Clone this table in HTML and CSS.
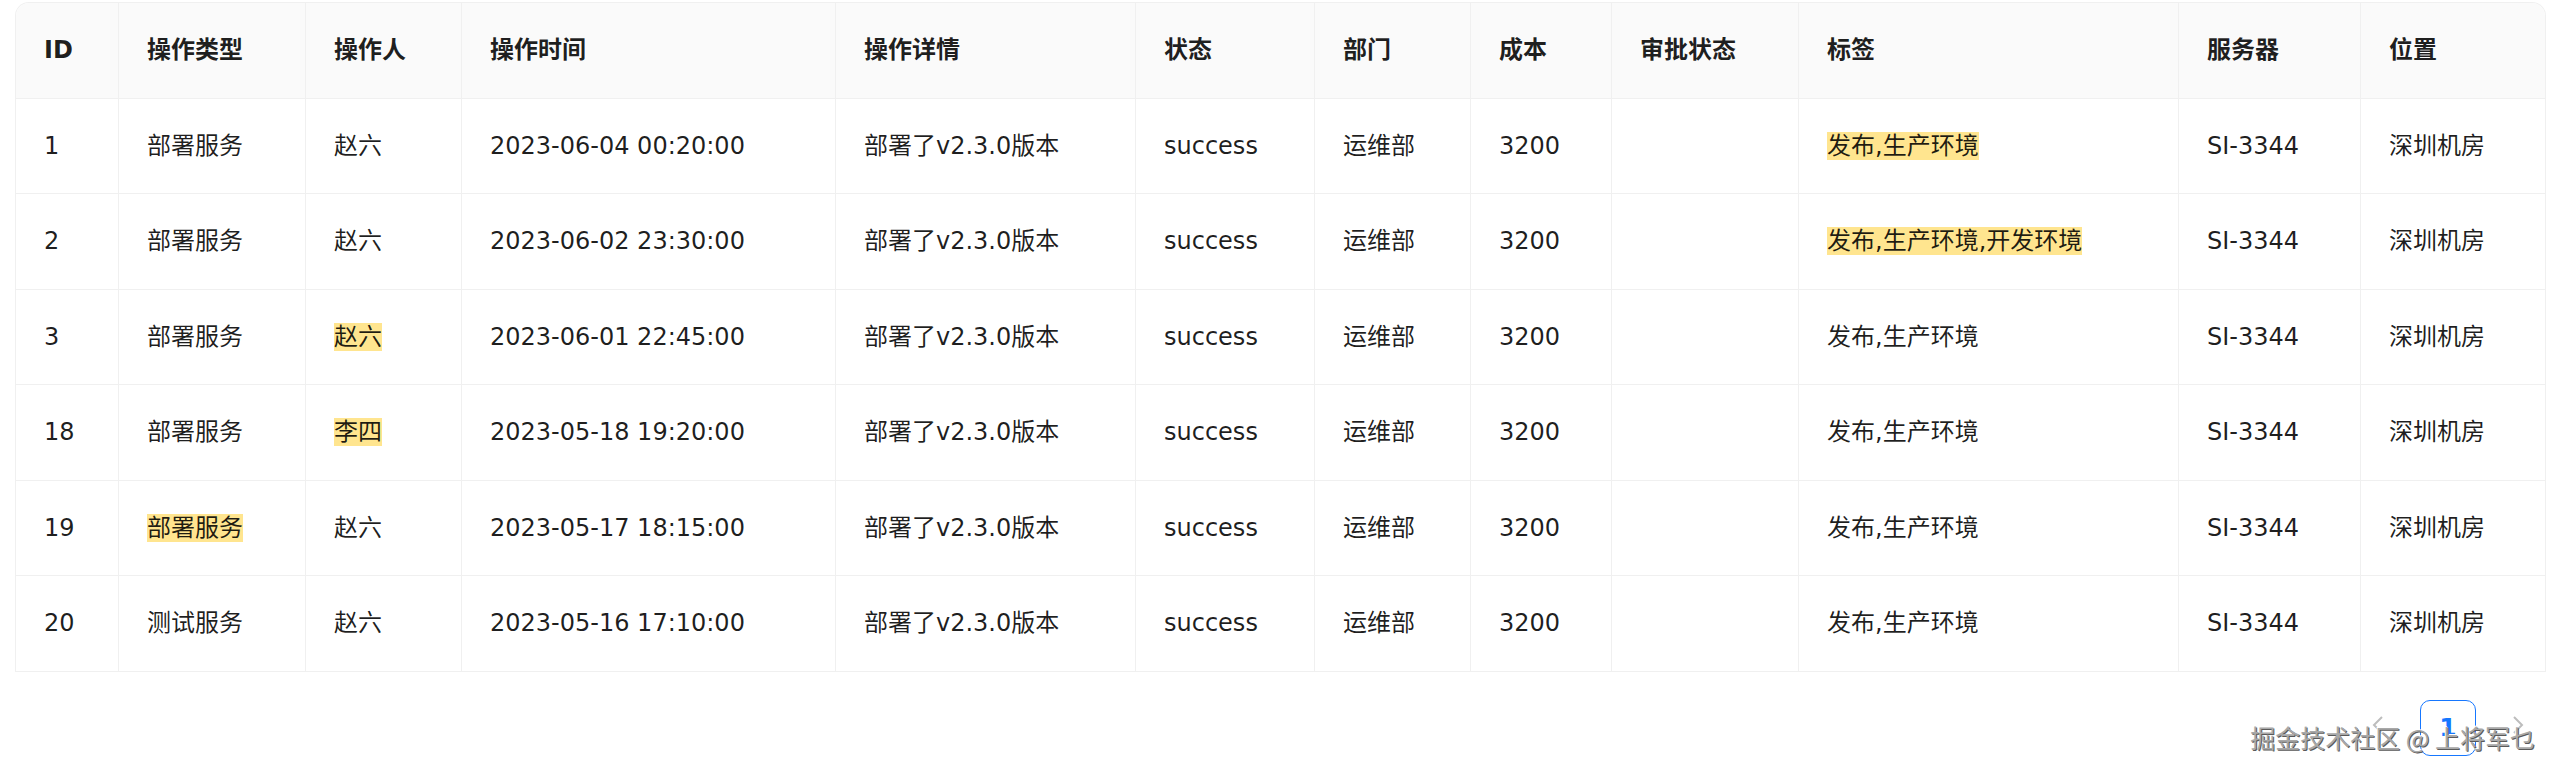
FILE: index.html
```html
<!DOCTYPE html>
<html lang="zh-CN">
<head>
<meta charset="utf-8">
<title>操作日志</title>
<link rel="stylesheet" href="styles.css">
</head>
<body>
<div class="page">
  <div class="table">
    <div class="row head">
      <div class="cell">ID</div>
      <div class="cell">操作类型</div>
      <div class="cell">操作人</div>
      <div class="cell">操作时间</div>
      <div class="cell">操作详情</div>
      <div class="cell">状态</div>
      <div class="cell">部门</div>
      <div class="cell">成本</div>
      <div class="cell">审批状态</div>
      <div class="cell">标签</div>
      <div class="cell">服务器</div>
      <div class="cell">位置</div>
    </div>
    <div class="row">
      <div class="cell">1</div>
      <div class="cell">部署服务</div>
      <div class="cell">赵六</div>
      <div class="cell">2023-06-04 00:20:00</div>
      <div class="cell">部署了v2.3.0版本</div>
      <div class="cell">success</div>
      <div class="cell">运维部</div>
      <div class="cell">3200</div>
      <div class="cell"></div>
      <div class="cell"><mark class="hl">发布,生产环境</mark></div>
      <div class="cell">SI-3344</div>
      <div class="cell">深圳机房</div>
    </div>
    <div class="row">
      <div class="cell">2</div>
      <div class="cell">部署服务</div>
      <div class="cell">赵六</div>
      <div class="cell">2023-06-02 23:30:00</div>
      <div class="cell">部署了v2.3.0版本</div>
      <div class="cell">success</div>
      <div class="cell">运维部</div>
      <div class="cell">3200</div>
      <div class="cell"></div>
      <div class="cell"><mark class="hl">发布,生产环境,开发环境</mark></div>
      <div class="cell">SI-3344</div>
      <div class="cell">深圳机房</div>
    </div>
    <div class="row">
      <div class="cell">3</div>
      <div class="cell">部署服务</div>
      <div class="cell"><mark class="hl">赵六</mark></div>
      <div class="cell">2023-06-01 22:45:00</div>
      <div class="cell">部署了v2.3.0版本</div>
      <div class="cell">success</div>
      <div class="cell">运维部</div>
      <div class="cell">3200</div>
      <div class="cell"></div>
      <div class="cell">发布,生产环境</div>
      <div class="cell">SI-3344</div>
      <div class="cell">深圳机房</div>
    </div>
    <div class="row">
      <div class="cell">18</div>
      <div class="cell">部署服务</div>
      <div class="cell"><mark class="hl">李四</mark></div>
      <div class="cell">2023-05-18 19:20:00</div>
      <div class="cell">部署了v2.3.0版本</div>
      <div class="cell">success</div>
      <div class="cell">运维部</div>
      <div class="cell">3200</div>
      <div class="cell"></div>
      <div class="cell">发布,生产环境</div>
      <div class="cell">SI-3344</div>
      <div class="cell">深圳机房</div>
    </div>
    <div class="row">
      <div class="cell">19</div>
      <div class="cell"><mark class="hl">部署服务</mark></div>
      <div class="cell">赵六</div>
      <div class="cell">2023-05-17 18:15:00</div>
      <div class="cell">部署了v2.3.0版本</div>
      <div class="cell">success</div>
      <div class="cell">运维部</div>
      <div class="cell">3200</div>
      <div class="cell"></div>
      <div class="cell">发布,生产环境</div>
      <div class="cell">SI-3344</div>
      <div class="cell">深圳机房</div>
    </div>
    <div class="row">
      <div class="cell">20</div>
      <div class="cell">测试服务</div>
      <div class="cell">赵六</div>
      <div class="cell">2023-05-16 17:10:00</div>
      <div class="cell">部署了v2.3.0版本</div>
      <div class="cell">success</div>
      <div class="cell">运维部</div>
      <div class="cell">3200</div>
      <div class="cell"></div>
      <div class="cell">发布,生产环境</div>
      <div class="cell">SI-3344</div>
      <div class="cell">深圳机房</div>
    </div>
  </div>
  <div class="pager">
    <button class="pg-btn pg-arrow" type="button" aria-label="上一页">
      <svg width="14" height="22" viewBox="0 0 14 22"><path d="M11 3 L3 11 L11 19" fill="none" stroke="#bdbdbd" stroke-width="2"/></svg>
    </button>
    <button class="pg-btn pg-item active" type="button">1</button>
    <button class="pg-btn pg-arrow" type="button" aria-label="下一页">
      <svg width="14" height="22" viewBox="0 0 14 22"><path d="M3 3 L11 11 L3 19" fill="none" stroke="#bdbdbd" stroke-width="2"/></svg>
    </button>
  </div>
</div>
<div class="watermark">掘金技术社区 @ 上将军乜</div>
</body>
</html>
```
FILE: styles.css
```css
html, body {
  margin: 0;
  padding: 0;
  background: #ffffff;
}

body {
  font-family: "DejaVu Sans", "Noto Sans CJK SC", sans-serif;
  font-size: 24px;
  color: rgba(0, 0, 0, 0.88);
  width: 2559px;
  height: 776px;
  overflow: hidden;
  position: relative;
}

.page {
  padding: 2px 13px 0 15px;
}

.table {
  border: 1px solid #f0f0f0;
  border-bottom: none;
  border-radius: 14px 14px 0 0;
  overflow: hidden;
  width: 2529px;
}

.row {
  display: grid;
  grid-template-columns: 103px 187px 156px 374px 300px 179px 156px 141px 187px 380px 182px 184px;
}

.cell {
  padding: 28.25px 27px 28.25px 28px;
  line-height: 38px;
  height: 38px;
  border-right: 1px solid #f0f0f0;
  border-bottom: 1px solid #f0f0f0;
  white-space: nowrap;
  overflow: hidden;
}

.cell:last-child {
  border-right: none;
}

.head .cell {
  background: #fafafa;
  font-weight: 700;
  color: rgba(0, 0, 0, 0.88);
}

.hl {
  background: #ffe58f;
  color: rgba(0, 0, 0, 0.88);
  padding: 0;
}

.pager {
  display: flex;
  justify-content: flex-end;
  align-items: center;
  gap: 14px;
  margin-top: 28px;
}

.pg-btn {
  width: 56px;
  height: 56px;
  box-sizing: border-box;
  border-radius: 10px;
  background: transparent;
  border: 1px solid transparent;
  display: flex;
  align-items: center;
  justify-content: center;
  padding: 0;
  font-family: "DejaVu Sans", sans-serif;
  font-size: 25px;
}

.pg-arrow {
  padding-bottom: 6px;
}

.pg-item.active {
  border: 1.5px solid #1677ff;
  color: #1677ff;
  font-weight: 600;
}

.watermark {
  position: absolute;
  right: 24px;
  bottom: 24px;
  font-family: "Noto Sans CJK SC", sans-serif;
  font-size: 25px;
  line-height: 30px;
  color: #a8a8a8;
  text-shadow: 1px 1px 0 #5a5a5a, -1px -1px 0 #ffffff;
  pointer-events: none;
}
```
